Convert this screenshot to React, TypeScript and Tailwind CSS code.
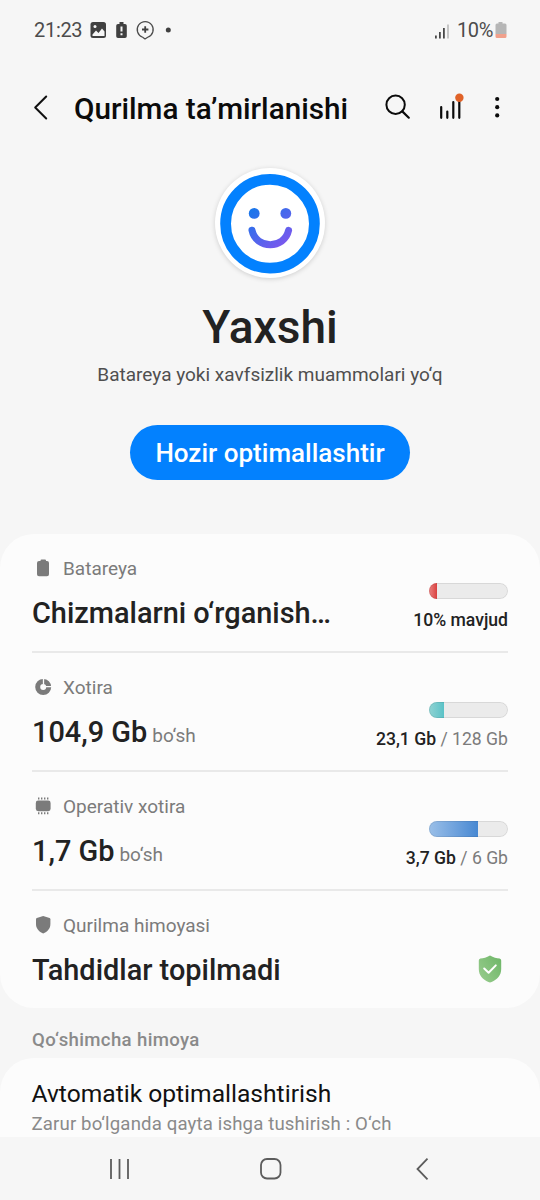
import type { ReactNode } from "react";

type Row = {
  label: string;
  icon: ReactNode;
  title: string;
  suffix?: string;
  bar?: { width: string; fill: string };
  used?: string;
  total?: string;
};

const rows: Row[] = [
  {
    label: "Batareya",
    icon: (
      <path d="M8.5 1.5a1 1 0 0 1 1-1H13a1 1 0 0 1 1 1V2h1a2 2 0 0 1 2 2v11.300a2 2 0 0 1-2 2H7a2 2 0 0 1-2-2V4a2 2 0 0 1 2-2h1.500Z" />
    ),
    title: "Chizmalarni o‘rganish…",
    bar: { width: "8px", fill: "bg-linear-to-r from-[#ea8080] to-[#d93f3f]" },
    used: "10% mavjud",
  },
  {
    label: "Xotira",
    icon: (
      <>
        <circle cx="11.2" cy="9" r="5.5" fill="none" stroke="#7b7b7b" strokeWidth="5" />
        <path d="M11.5 0v6.500M13 8.700h7" stroke="#fcfcfc" strokeWidth="1.3" />
      </>
    ),
    title: "104,9 Gb",
    suffix: "bo‘sh",
    bar: { width: "15px", fill: "bg-linear-to-r from-[#8fd3d3] to-[#59c2c7]" },
    used: "23,1 Gb",
    total: "128 Gb",
  },
  {
    label: "Operativ xotira",
    icon: (
      <>
        <rect x="3.8" y="3.600" width="14.8" height="10.6" rx="2.4" />
        <path
          d="M6.700.400v2M9.700.400v2M12.700.400v2M15.700.400v2M6.700 15.300v2M9.700 15.300v2M12.700 15.300v2M15.700 15.300v2"
          stroke="#7b7b7b"
          strokeWidth="1.4"
        />
      </>
    ),
    title: "1,7 Gb",
    suffix: "bo‘sh",
    bar: { width: "49px", fill: "bg-linear-to-r from-[#9abfe8] to-[#4788d2]" },
    used: "3,7 Gb",
    total: "6 Gb",
  },
  {
    label: "Qurilma himoyasi",
    icon: (
      <path d="M11.200 0 17.600 2.100q.8.300.8 1.100V8c0 4.500-3 7.700-7.200 9.500C7 15.700 4 12.500 4 8V3.200q0-.8.800-1.100Z" />
    ),
    title: "Tahdidlar topilmadi",
  },
];

function StatusBar() {
  return (
    <div className="flex h-[60px] items-center justify-between pl-[34px] pr-[32px] text-[#4c4c4c]">
      <div className="flex items-center">
        <span className="w-[56px] text-[20px] leading-6 tracking-[-0.3px]">21:23</span>
        <svg width="90" height="24" viewBox="0 0 90 24" fill="none">
          <rect x="0.5" y="4" width="15.5" height="16" rx="2.5" fill="#404040" />
          <circle cx="5" cy="8.5" r="1.5" fill="#f6f6f6" />
          <path d="M2.500 16.500 6 12.500l2.500 2.500L12 10.500l2.500 3v4.500h-12Z" fill="#f6f6f6" />
          <path d="M29.500 4h4v2h1.500a1.800 1.800 0 0 1 1.800 1.800v10.400a1.800 1.800 0 0 1-1.800 1.800h-7a1.800 1.800 0 0 1-1.800-1.800V7.800A1.800 1.800 0 0 1 28 6h1.500Z" fill="#404040" />
          <path d="M31.500 8.500v5M31.500 15.200v2" stroke="#f6f6f6" strokeWidth="2" />
          <path d="M52.700 19.200a8 8 0 1 1 5 0L55 21Z" stroke="#4c4c4c" strokeWidth="1.2" strokeLinejoin="round" />
          <path d="M55.200 8.300v6.400M52 11.500h6.400" stroke="#404040" strokeWidth="1.8" />
          <circle cx="78.3" cy="12" r="2.5" fill="#404040" />
        </svg>
      </div>
      <div className="flex items-center">
        <svg width="16" height="24" viewBox="0 0 16 24" strokeWidth="1.7">
          <path d="M.9 17.500v3M4.900 14v6.500M8.900 10v10.500" stroke="#404040" />
          <path d="M13 6.500v14" stroke="#bdbdbd" />
        </svg>
        <span className="ml-[6px] w-[37px] text-[20px] leading-6 tracking-[-0.4px]">10%</span>
        <svg width="14" height="24" viewBox="0 0 14 24">
          <path d="M4.500 4h4v1.500H11A1.500 1.500 0 0 1 12.500 7v9h-11V7A1.500 1.500 0 0 1 3 5.500h1.500Z" fill="#b6b6b6" />
          <path d="M1.500 16h11v2.500a1.500 1.500 0 0 1-1.500 1.500H3a1.500 1.500 0 0 1-1.500-1.500Z" fill="#f0a08c" />
        </svg>
      </div>
    </div>
  );
}

function Header() {
  return (
    <header className="flex h-[94px] items-center pl-[32px] pr-[32px]">
      <svg width="42" height="30" viewBox="0 0 42 30" fill="none" stroke="#111" strokeWidth="2" strokeLinecap="round" strokeLinejoin="round">
        <path d="M14.200 4.500 3.200 15.500l11 11" />
      </svg>
      <h1 className="flex-1 whitespace-nowrap pt-[3px] text-[29.7px] font-medium leading-9 text-[#0b0b0b]">
        Qurilma ta’mirlanishi
      </h1>
      <svg width="124" height="40" viewBox="0 0 124 40" fill="none" stroke="#0b0b0b" strokeLinecap="round">
        <circle cx="11.6" cy="17.7" r="9.2" strokeWidth="2" />
        <path d="m18.300 24.400 6.500 6.300" strokeWidth="2.2" />
        <path d="M57.200 20v10.800M63.300 24.500v6.300M69.300 15v15.800M75.300 14v16.800" strokeWidth="2.2" />
        <circle cx="75.4" cy="10.8" r="4.2" fill="#e06228" stroke="none" />
        <g fill="#0b0b0b" stroke="none">
          <circle cx="113.2" cy="12" r="2.1" />
          <circle cx="113.2" cy="20.2" r="2.1" />
          <circle cx="113.2" cy="28.4" r="2.1" />
        </g>
      </svg>
    </header>
  );
}

function Smiley() {
  return (
    <div className="mt-[14px] size-[110px] rounded-full bg-white shadow-[0_1px_5px_rgba(0,0,0,0.16)]">
      <svg width="110" height="110" viewBox="0 0 110 110" fill="none">
        <defs>
          <linearGradient id="face" x1="34" y1="40" x2="68" y2="84" gradientUnits="userSpaceOnUse">
            <stop stopColor="#1478ea" />
            <stop offset="1" stopColor="#8455ee" />
          </linearGradient>
        </defs>
        <circle cx="55" cy="55.8" r="44.4" stroke="#0381fe" strokeWidth="10.8" />
        <circle cx="39.2" cy="45.4" r="5.4" fill="url(#face)" />
        <circle cx="70.8" cy="45.4" r="5.4" fill="url(#face)" />
        <path d="M37 62.300C41 81.500 69.500 81.500 73.600 62.300" stroke="url(#face)" strokeWidth="7" strokeLinecap="round" />
      </svg>
    </div>
  );
}

function StatusRow({ row }: { row: Row }) {
  return (
    <div className="flex h-[119px] justify-between border-b-2 border-[#e9e9e9] last:border-0">
      <div className="pt-[23px]">
        <div className="flex h-6 items-center text-[19px] text-[#7b7b7b]">
          <svg className="mr-[9px]" width="22" height="20" viewBox="0 0 22 20" fill="#7b7b7b">
            {row.icon}
          </svg>
          {row.label}
        </div>
        <div className="mt-[12px] whitespace-nowrap leading-10">
          <span className="text-[28.9px] font-medium text-[#222]">{row.title}</span>
          {row.suffix && <span className="ml-[5px] text-[19px] text-[#7b7b7b]">{row.suffix}</span>}
        </div>
      </div>
      {row.bar ? (
        <div className="flex flex-col items-end pt-[49px]">
          <div className="relative h-4 w-[79px] overflow-hidden rounded-full bg-[#ebebeb]">
            <div className={`h-full ${row.bar.fill}`} style={{ width: row.bar.width }} />
            <div className="absolute inset-0 rounded-full border border-black/8" />
          </div>
          <div className="mt-[9px] whitespace-nowrap text-[17.6px] leading-6 text-[#7b7b7b]">
            <span className="font-medium text-[#222]">{row.used}</span>
            {row.total && ` / ${row.total}`}
          </div>
        </div>
      ) : (
        <svg className="mr-[5px] mt-[64px]" width="26" height="28" viewBox="0 0 26 28" fill="none">
          <defs>
            <linearGradient id="shield" x1="0" y1="20" x2="26" y2="4" gradientUnits="userSpaceOnUse">
              <stop stopColor="#97cb8c" />
              <stop offset="1" stopColor="#6db667" />
            </linearGradient>
          </defs>
          <path d="M13 .4c3.500 1.900 6.500 2.800 9.600 3.200q1.600.300 1.600 2V14c0 6.500-4 10.500-9.600 13.100q-1.600.6-3.200 0C5.800 24.500 1.800 20.500 1.800 14V5.600q0-1.700 1.600-2C6.500 3.200 9.500 2.300 13 .4Z" fill="url(#shield)" />
          <path d="m7.200 13.500 4.400 4.200 7.200-7.300" stroke="#fff" strokeWidth="2" strokeLinecap="round" strokeLinejoin="round" />
        </svg>
      )}
    </div>
  );
}

function NavBar() {
  return (
    <nav className="flex h-[63px] shrink-0 items-center justify-between bg-[#f6f6f6] pl-[108px] pr-[107px]">
      <svg width="24" height="24" fill="none" stroke="#5c5c5c" strokeWidth="1.8">
        <path d="M3 2v20M11.500 2v20M20 2v20" />
      </svg>
      <svg width="24" height="24" fill="none" stroke="#5c5c5c" strokeWidth="1.8">
        <rect x="2" y="2" width="19.5" height="19.5" rx="6" />
      </svg>
      <svg width="24" height="24" fill="none" stroke="#5c5c5c" strokeWidth="1.8">
        <path d="M18.500 1.700 8.500 12l10 10.300" />
      </svg>
    </nav>
  );
}

export default function App() {
  return (
    <div className="flex h-[1200px] w-[540px] flex-col overflow-hidden bg-[#f6f6f6] font-['Roboto',sans-serif]">
      <div className="min-h-0 flex-1 overflow-hidden">
        <StatusBar />
        <Header />

        {/* Overall state */}
        <section className="flex h-[380px] flex-col items-center">
          <Smiley />
          <h2 className="mt-[21px] text-[46px] font-medium leading-[56px] text-[#222]">Yaxshi</h2>
          <p className="mt-[8px] text-[19px] leading-6 text-[#4f4f4f]">
            Batareya yoki xavfsizlik muammolari yo‘q
          </p>
          <button className="mt-[38px] h-[55px] w-[280px] whitespace-nowrap rounded-full bg-[#0381fe] pt-[2px] text-[26px] font-medium text-white">
            Hozir optimallashtir
          </button>
        </section>

        {/* Device details */}
        <section className="h-[474px] rounded-[34px] bg-[#fcfcfc] px-[32px]">
          {rows.map((row) => (
            <StatusRow key={row.label} row={row} />
          ))}
        </section>

        <h3 className="flex h-[50px] items-center pl-[32px] pt-[15px] text-[18.6px] font-medium tracking-[0.35px] text-[#8a8a8a]">
          Qo‘shimcha himoya
        </h3>
        <section className="h-[140px] rounded-t-[34px] bg-[#fcfcfc] px-[31.5px] pt-[20px]">
          <div className="text-[24.6px] leading-8 text-[#111]">Avtomatik optimallashtirish</div>
          <div className="mt-[2px] text-[18.6px] leading-6 tracking-[0.15px] text-[#8a8a8a]">
            Zarur bo‘lganda qayta ishga tushirish : O‘ch
          </div>
        </section>
      </div>
      <NavBar />
    </div>
  );
}
